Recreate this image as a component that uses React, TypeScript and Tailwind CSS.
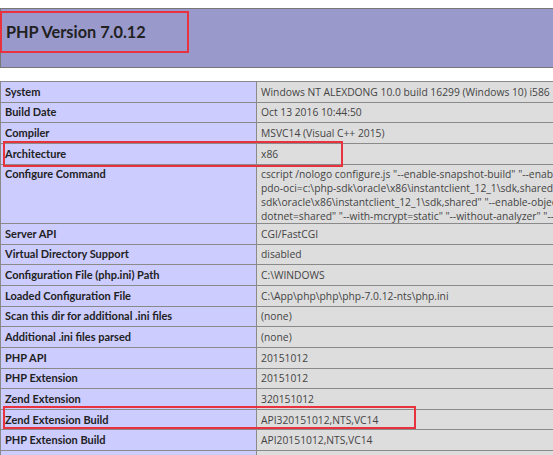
import React from "react";

type Row = { k: string; v: React.ReactNode; tall?: boolean };

const rows: Row[] = [
  { k: "System", v: "Windows NT ALEXDONG 10.0 build 16299 (Windows 10) i586" },
  { k: "Build Date", v: "Oct 13 2016 10:44:50" },
  { k: "Compiler", v: "MSVC14 (Visual C++ 2015)" },
  { k: "Architecture", v: "x86" },
  {
    k: "Configure Command",
    tall: true,
    v: (
      <>
        cscript /nologo configure.js "--enable-snapshot-build" "--enable-debug-pack" "--disable-zts" "--with-
        <br />
        pdo-oci=c:\php-sdk\oracle\x86\instantclient_12_1\sdk,shared" "--with-oci8-12c=c:\php-
        <br />
        sdk\oracle\x86\instantclient_12_1\sdk,shared" "--enable-object-out-dir=../obj/" "--enable-com-
        <br />
        dotnet=shared" "--with-mcrypt=static" "--without-analyzer" "--with-pgo"
      </>
    ),
  },
  { k: "Server API", v: "CGI/FastCGI" },
  { k: "Virtual Directory Support", v: "disabled" },
  { k: "Configuration File (php.ini) Path", v: "C:\\WINDOWS" },
  { k: "Loaded Configuration File", v: "C:\\App\\php\\php\\php-7.0.12-nts\\php.ini" },
  { k: "Scan this dir for additional .ini files", v: "(none)" },
  { k: "Additional .ini files parsed", v: "(none)" },
  { k: "PHP API", v: "20151012" },
  { k: "PHP Extension", v: "20151012" },
  { k: "Zend Extension", v: "320151012" },
  { k: "Zend Extension Build", v: "API320151012,NTS,VC14" },
  { k: "PHP Extension Build", v: "API20151012,NTS,VC14" },
  { k: "Debug Build", v: "no" },
];

function InfoRow({ row }: { row: Row }) {
  const h = row.tall ? "h-[59.5px] items-start pt-[2px]" : "h-[20.65px] items-center";
  return (
    <div className="flex">
      <div
        className={`flex ${h} w-[256px] shrink-0 bg-[#ccccff] border-r border-b border-[#8a8a8a] px-[4px] font-bold text-[11px] text-[#222]`}
        style={{ fontFamily: "Lato, sans-serif" }}
      >
        {row.k}
      </div>
      <div className={`flex ${h} w-[700px] shrink-0 bg-[#dddddd] border-b border-[#8a8a8a] px-[4px] text-[10.3px] text-[#444] whitespace-nowrap`}>
        <span>{row.v}</span>
      </div>
    </div>
  );
}

export default function App() {
  return (
    <div
      className="relative w-[553px] h-[455px] overflow-hidden bg-white leading-[14.3px]"
      style={{ fontFamily: '"Open Sans", "Noto Sans", sans-serif' }}
    >
      {/* header */}
      <div className="mt-[8px] h-[60px] w-[800px] bg-[#9999cc] border-t border-l border-b border-[#777]">
        <h1
          className="pl-[5px] pt-[13px] text-[16.3px] leading-[20px] font-bold text-[#222]"
          style={{ fontFamily: "Lato, sans-serif" }}
        >
          PHP Version 7.0.12
        </h1>
      </div>

      {/* table */}
      <div className="mt-[13px] w-[960px] border-t border-l border-[#8a8a8a]">
        {rows.map((r) => (
          <InfoRow key={r.k} row={r} />
        ))}
      </div>

      {/* red annotation boxes */}
      <div className="absolute left-0 top-[11px] w-[189px] h-[42px] border-2 border-[#e8333f]" />
      <div className="absolute left-[3px] top-[141px] w-[340px] h-[26px] border-2 border-[#e8333f]" />
      <div className="absolute left-[3px] top-[406px] w-[413px] h-[23px] border-2 border-[#e8333f]" />
    </div>
  );
}
